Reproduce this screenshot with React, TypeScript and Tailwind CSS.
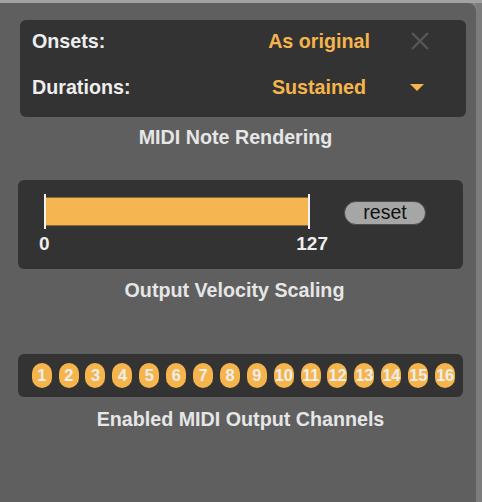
import React from "react";

const ORANGE = "#f5b54c";

export default function App() {
  const channels = Array.from({ length: 16 }, (_, i) => i + 1);
  return (
    <div
      className="w-[482px] h-[502px] bg-[#858585] flex flex-col overflow-hidden"
      style={{ fontFamily: '"Liberation Sans", Arial, Helvetica, sans-serif' }}
    >
      <div className="h-[3px] w-full bg-[#a2a2a2] shrink-0" />
      <div className="flex flex-1">
        <div className="w-[476px] h-full bg-[#5f5f5f] rounded-tr-[8px] flex flex-col">
          {/* Box 1 */}
          <div className="ml-[20px] mt-[17px] w-[446px] h-[97px] rounded-[6px] bg-[#333333] pt-[4px] flex flex-col gap-[12px]">
            <div className="flex items-center h-[34px]">
              <div className="w-[248px] pl-[12px] text-[19.7px] leading-[20px] font-bold text-[#eeeeee]">Onsets:</div>
              <div className="w-[102px] text-center text-[19.7px] leading-[20px] font-bold text-[#f5b54c] whitespace-nowrap">As original</div>
              <div className="ml-[40px] w-[20px] h-[20px] flex items-center justify-center">
                <svg width="20" height="20" viewBox="0 0 20 20">
                  <path d="M2 2 L18 18 M18 2 L2 18" stroke="#575757" strokeWidth="2.4" strokeLinecap="butt" />
                </svg>
              </div>
            </div>
            <div className="flex items-center h-[34px]">
              <div className="w-[248px] pl-[12px] text-[19.7px] leading-[20px] font-bold text-[#eeeeee]">Durations:</div>
              <div className="w-[102px] text-center text-[19.7px] leading-[20px] font-bold text-[#f5b54c] whitespace-nowrap">Sustained</div>
              <div className="ml-[37px] w-[20px] h-[20px] flex items-center justify-center">
                <svg width="14" height="7" viewBox="0 0 14 7">
                  <path d="M0 0 L14 0 L7 7 Z" fill={ORANGE} />
                </svg>
              </div>
            </div>
          </div>
          <div className="mt-[10px] pr-[5px] text-center text-[19.7px] leading-[20px] font-bold text-[#e6e6e6]">MIDI Note Rendering</div>

          {/* Box 2 */}
          <div className="ml-[18px] mt-[33px] w-[445px] h-[89px] rounded-[6px] bg-[#333333] flex items-start">
            <div className="ml-[26px] mt-[14px] w-[266px] flex flex-col">
              <div className="flex h-[35px]">
                <div className="w-[2px] bg-[#f2f2f2]" />
                <div className="flex-1 my-[3px] bg-[#f5b651] border-y border-[#8a6a34]" />
                <div className="w-[2px] bg-[#f2f2f2]" />
              </div>
              <div className="ml-[-5px] w-[289px] mt-[5px] flex justify-between text-[19px] leading-[20px] font-bold text-[#eeeeee]">
                <span>0</span>
                <span>127</span>
              </div>
            </div>
            <div className="ml-[34px] mt-[21px] w-[82px] h-[24px] rounded-full bg-[#a6a6a6] border border-[#4d4d4d] flex items-center justify-center text-[19.5px] leading-none text-[#111111]">
              reset
            </div>
          </div>
          <div className="mt-[11px] pr-[7px] text-center text-[19.7px] leading-[20px] font-bold text-[#e6e6e6]">Output Velocity Scaling</div>

          {/* Box 3 */}
          <div className="ml-[18px] mt-[54px] w-[445px] h-[43px] rounded-[6px] bg-[#333333] flex items-center pl-[13.7px] gap-[6.9px]">
            {channels.map((c) => (
              <div
                key={c}
                className="w-[20px] h-[25px] shrink-0 rounded-full bg-[#f5b54c] flex items-center justify-center text-[16.5px] leading-none font-bold text-[#eeeeee] whitespace-nowrap"
              >
                <span className="tracking-[-0.3px]">{c}</span>
              </div>
            ))}
          </div>
          <div className="mt-[12px] pl-[5px] text-center text-[19.7px] leading-[20px] font-bold text-[#e6e6e6]">Enabled MIDI Output Channels</div>
        </div>
        <div className="flex-1 bg-[#7c7c7c]" />
      </div>
    </div>
  );
}
